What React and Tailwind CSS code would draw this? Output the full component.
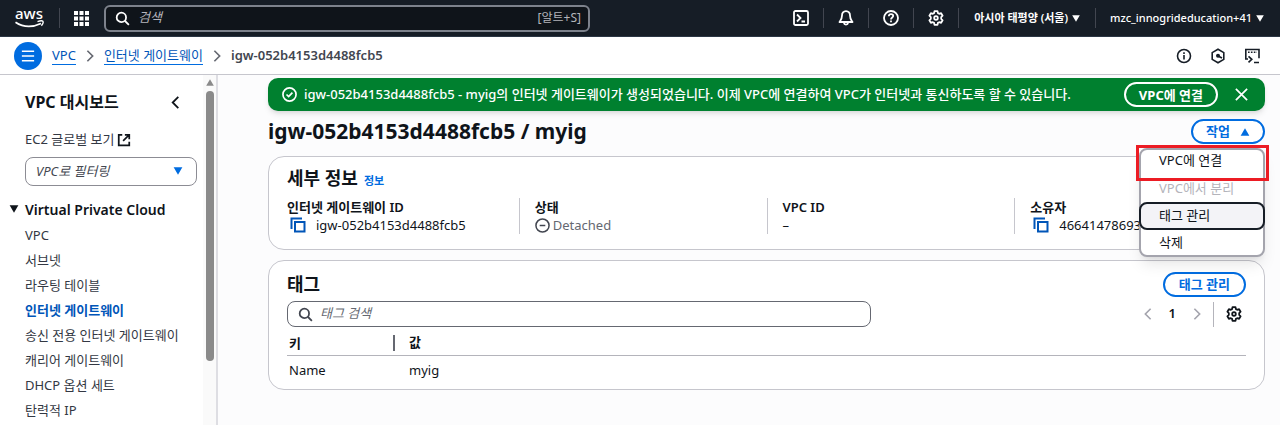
import React from "react";

const Caret = ({ className, up }) => (
  <svg viewBox="0 0 10 9" className={className} fill="currentColor" aria-hidden="true">
    <path d={up ? "M5 .4 9.9 8.6H.1z" : "M5 8.6.1.4h9.800z"} />
  </svg>
);

const Icon = ({ children, className = "size-4", width = 1.8 }) => (
  <svg
    viewBox="0 0 16 16"
    className={className}
    fill="none"
    stroke="currentColor"
    strokeWidth={width}
    aria-hidden="true"
  >
    {children}
  </svg>
);

const SearchIcon = ({ className }) => (
  <Icon className={className} width={1.9}>
    <circle cx="6.8" cy="6.8" r="5" />
    <path d="m10.400 10.400 4.400 4.400" />
  </Icon>
);

const GearIcon = () => (
  <Icon>
    <path
      strokeLinejoin="round"
      d="M6.500 1.200h3l.4 1.900 1.300.7 1.900-.6 1.500 2.500-1.400 1.400v1.800l1.400 1.400-1.500 2.500-1.900-.6-1.300.7-.4 1.900h-3l-.4-1.900-1.300-.7-1.900.6-1.500-2.500 1.400-1.400V7.100L1.400 5.700l1.500-2.500 1.900.6 1.300-.7z"
    />
    <circle cx="8" cy="8" r="1.800" />
  </Icon>
);

const CopyIcon = () => (
  <Icon className="size-4" width={2}>
    <path d="M5 5h9.500v9.500H5z" />
    <path d="M1.500 12V1.500H12" />
  </Icon>
);

const Chevron = ({ left, className }) => (
  <Icon className={className} width={1.9}>
    <path d={left ? "M11 2 5 8l6 6" : "m5 2 6 6-6 6"} />
  </Icon>
);

const Rule = ({ className = "" }) => <span className={"h-5 w-px shrink-0 bg-[#424650] " + className} />;

function TopBar() {
  return (
    <header className="flex h-[37px] shrink-0 items-center border-b border-[#2b3644] bg-[#161d26] pl-[15px] text-white">
      <a href="#home" aria-label="AWS" className="shrink-0">
        <svg viewBox="0 0 29 36" className="h-9 w-[29px]" aria-hidden="true">
          <text x="14" y="19" textAnchor="middle" fontSize="15" fontWeight="500" fontFamily="Noto Sans, sans-serif" fill="#fff">
            aws
          </text>
          <path d="M.5 22.200c7.500 5 17 5.200 25.500 1.200" fill="none" stroke="#fff" strokeWidth="1.700" />
          <path d="M22.500 21.600c2.200-.8 4.800-.9 5.400-.3.500.7-.1 2.800-1.500 4.500" fill="none" stroke="#fff" strokeWidth="1.400" />
        </svg>
      </a>
      <Rule className="ml-[15px]" />
      <button aria-label="서비스" className="ml-3.5 shrink-0">
        <svg viewBox="0 0 15 15" className="size-[15px]" fill="currentColor" aria-hidden="true">
          {[0, 5.5, 11].map((y) =>
            [0, 5.5, 11].map((x) => <rect key={x + "-" + y} x={x} y={y} width="4" height="4" />)
          )}
        </svg>
      </button>
      <label className="ml-[15px] flex h-[27px] w-[486px] items-center rounded-md border-2 border-[#7d828c] bg-[#0f141a] pr-[7px] pl-[9px]">
        <SearchIcon className="size-[15px] shrink-0" />
        <input
          type="search"
          aria-label="검색"
          placeholder="검색"
          className="ml-2 min-w-0 flex-1 bg-transparent text-[13px] italic outline-none placeholder:text-[#b4b4bb]"
        />
        <span className="text-[12px] text-[#b4b4bb]">[알트+S]</span>
      </label>
      <div className="ml-auto flex items-center">
        <button aria-label="CloudShell" className="mr-3.5">
          <Icon>
            <rect x="1" y="1" width="14" height="14" rx="1.500" />
            <path d="m4 4.500 3.500 3.500L4 11.500M8.500 11.500H12" />
          </Icon>
        </button>
        <Rule />
        <button aria-label="알림" className="mx-3.5">
          <Icon>
            <path strokeLinejoin="round" d="M8 1.200c-2.600 0-4 1.900-4 4.200C4 9 2.800 10.200 1.500 12h13C13.200 10.200 12 9 12 5.400c0-2.300-1.400-4.200-4-4.200z" />
            <path d="M6 13c.2 2.200 3.800 2.200 4 0" />
          </Icon>
        </button>
        <Rule />
        <button aria-label="도움말" className="mx-3.5">
          <Icon>
            <circle cx="8" cy="8" r="7" />
            <path d="M5.800 6.300C5.900 4.800 6.900 4.200 8 4.200c1.300 0 2.200.7 2.200 1.900C10.200 7.600 8 7.600 8 9.500M8 10.500v1.700" />
          </Icon>
        </button>
        <Rule />
        <button aria-label="설정" className="mx-3.5">
          <GearIcon />
        </button>
        <Rule />
        <button className="mx-[15px] flex items-center gap-1 text-[11px] font-semibold">
          아시아 태평양 (서울)
          <Caret className="h-[7px] w-2" />
        </button>
        <Rule />
        <button className="mr-4 ml-3.5 flex items-center gap-1 text-[11px] font-medium">
          mzc_innogrideducation+41
          <Caret className="h-[7px] w-2" />
        </button>
      </div>
    </header>
  );
}

function Breadcrumbs() {
  return (
    <div className="flex h-[38px] shrink-0 items-center border-b border-[#c6c6cd] bg-white pr-5 pl-3.5">
      <button aria-label="탐색 열기" className="grid size-7 place-items-center rounded-full bg-[#006ce0] text-white">
        <Icon className="size-3.5" width={1.8}>
          <path d="M1 2.500h14M1 8h14M1 13.500h14" />
        </Icon>
      </button>
      <nav className="ml-2.5 flex items-center gap-[7px] text-[13px] leading-[17px]">
        <a href="#vpc" className="border-b border-[#006ce0] text-[#0055b8]">VPC</a>
        <Chevron className="size-3.5 text-[#656871]" />
        <a href="#igw" className="border-b border-[#006ce0] text-[#0055b8]">인터넷 게이트웨이</a>
        <Chevron className="size-3.5 text-[#656871]" />
        <span className="font-semibold text-[#424650]">igw-052b4153d4488fcb5</span>
      </nav>
      <div className="ml-auto flex gap-[18px] text-[#161d26]">
        <button aria-label="정보">
          <Icon width={1.6}>
            <circle cx="8" cy="8" r="6.500" />
            <path d="M8 7v4.500M8 4.200v1.700" />
          </Icon>
        </button>
        <button aria-label="보안">
          <Icon width={1.6}>
            <path d="m8 1.200 5.800 3.400v6.800L8 14.800l-5.800-3.400V4.600z" />
            <path d="m8 8 4 2" />
            <circle cx="8" cy="7.800" r="1.200" fill="currentColor" />
          </Icon>
        </button>
        <button aria-label="터미널">
          <Icon width={1.6}>
            <path d="M4 11H1.800V1.500H15v8.800M4.500 8.300l3.300 3-3.300 3M10 14.500h5" />
            <path strokeDasharray="1.600 1.300" d="M4 4.300h9" />
          </Icon>
        </button>
      </div>
    </div>
  );
}

const links = [
  "VPC",
  "서브넷",
  "라우팅 테이블",
  "인터넷 게이트웨이",
  "송신 전용 인터넷 게이트웨이",
  "캐리어 게이트웨이",
  "DHCP 옵션 세트",
  "탄력적 IP",
];

function Sidebar() {
  return (
    <aside className="flex w-[218px] shrink-0 overflow-hidden border-r-2 border-[#dedee3] bg-white">
      <div className="min-w-0 flex-1 pt-4">
        <div className="flex h-[22px] items-center justify-between pr-5 pl-[25px]">
          <h2 className="text-[16px] font-bold">VPC 대시보드</h2>
          <button aria-label="탐색 닫기">
            <Chevron left className="size-[15px]" />
          </button>
        </div>
        <a href="#ec2" className="mt-[17px] ml-[25px] flex h-5 items-center gap-[3px] text-[13px] text-[#333843]">
          EC2 글로벌 보기
          <Icon className="size-3.5 text-[#0f141a]" width={2}>
            <path d="M6 2H2v12h12v-4M9 2h5v5M14 2 7 9" />
          </Icon>
        </a>
        <div className="relative mt-[7px] mr-1.5 ml-[25px]">
          <select
            aria-label="VPC로 필터링"
            className="h-[29px] w-full appearance-none rounded-lg border border-[#8c8c94] bg-white px-2.5 text-[13px] text-[#424650] italic"
          >
            <option>VPC로 필터링</option>
          </select>
          <Caret className="pointer-events-none absolute top-2.5 right-3.5 h-2 w-2.5 text-[#006ce0]" />
        </div>
        <button className="mt-[13px] flex h-5 items-center gap-1.5 pl-[9px] text-[14px] font-semibold">
          <Caret className="h-2 w-2.5" />
          Virtual Private Cloud
        </button>
        <ul className="mt-1 pl-[25px] text-[13px] leading-[25px]">
          {links.map((l) => (
            <li key={l}>
              <a href="#nav" className={l === "인터넷 게이트웨이" ? "font-bold text-[#0055b8]" : "text-[#333843]"}>
                {l}
              </a>
            </li>
          ))}
        </ul>
      </div>
      <div className="flex w-[13px] shrink-0 flex-col items-center bg-[#fafafa] pt-1" aria-hidden="true">
        <Caret up className="h-[7px] w-2 text-[#8a8a8a]" />
        <div className="mt-[5px] h-[270px] w-2 rounded-full bg-[#8a8a8a]" />
      </div>
    </aside>
  );
}

function Banner() {
  return (
    <div className="flex h-[33px] items-center rounded-[10px] bg-[#00802f] pr-4 pl-3.5 text-[13px] text-white shadow-md">
      <Icon className="size-[15px] shrink-0">
        <circle cx="8" cy="8" r="7" />
        <path d="m4.800 8 2.300 2.300 4-4.300" />
      </Icon>
      <p className="ml-[7px] font-medium">
        igw-052b4153d4488fcb5 - myig의 인터넷 게이트웨이가 생성되었습니다. 이제 VPC에 연결하여 VPC가 인터넷과 통신하도록 할 수 있습니다.
      </p>
      <button className="ml-auto h-[25px] shrink-0 rounded-full border-2 border-white px-[13px] leading-5 font-bold">
        VPC에 연결
      </button>
      <button aria-label="닫기" className="ml-4">
        <Icon className="size-[15px]">
          <path d="m2 2 12 12M14 2 2 14" />
        </Icon>
      </button>
    </div>
  );
}

function ActionsMenu() {
  return (
    <div className="relative">
      <button
        aria-expanded="true"
        className="flex h-[25px] items-center gap-2.5 rounded-full border-2 border-[#006ce0] bg-white px-[13px] text-[13px] font-bold text-[#006ce0]"
      >
        작업
        <Caret up className="h-2 w-2.5" />
      </button>
      <div
        role="menu"
        className="absolute top-[29px] right-0 z-10 flex w-[126px] flex-col rounded-lg border-2 border-[#a4a4ad] bg-white text-[13px] shadow-lg"
      >
        <button role="menuitem" className="h-[26px] pb-1 pl-[18px] text-left">VPC에 연결</button>
        <button role="menuitem" disabled className="h-[26px] pl-[18px] text-left text-[#b4b4bb]">VPC에서 분리</button>
        <button
          role="menuitem"
          className="-mx-0.5 h-7 rounded-lg border-2 border-[#161d26] bg-[#f3f3f7] pl-[18px] text-left"
        >
          태그 관리
        </button>
        <button role="menuitem" className="h-[25px] pl-[18px] text-left">삭제</button>
        <div className="pointer-events-none absolute -top-[5px] -right-[6px] -left-[5px] h-9 border-[3px] border-[#ec1c24]" />
      </div>
    </div>
  );
}

function Field({ label, children, first }) {
  return (
    <div className={"h-9 min-w-0 border-l pl-[15px] leading-[18px] " + (first ? "border-transparent" : "border-[#c6c6cd]")}>
      <dt className="font-semibold">{label}</dt>
      <dd className="flex items-center whitespace-nowrap">{children}</dd>
    </div>
  );
}

function Details() {
  return (
    <section className="mt-3 h-[94px] rounded-2xl border border-[#c6c6cd] bg-white px-[18px] pt-[9px]">
      <div className="flex h-6 items-baseline gap-1.5">
        <h2 className="text-[18px] leading-6 font-bold">세부 정보</h2>
        <a href="#info" className="text-[11px] font-bold text-[#006ce0]">정보</a>
      </div>
      <dl className="-mx-4 mt-2 grid grid-cols-4 text-[13px]">
        <Field label="인터넷 게이트웨이 ID" first>
          <button aria-label="ID 복사" className="mr-2.5 ml-[3px] text-[#0055b8]"><CopyIcon /></button>
          igw-052b4153d4488fcb5
        </Field>
        <Field label="상태">
          <span className="flex items-center gap-[3px] text-[#656871]">
            <Icon className="size-[15px] text-[#424650]" width={1.6}>
              <circle cx="8" cy="8" r="7" />
              <path d="M5 8h6" />
            </Icon>
            Detached
          </span>
        </Field>
        <Field label="VPC ID">–</Field>
        <Field label="소유자">
          <button aria-label="소유자 복사" className="mr-2.5 ml-[3px] text-[#0055b8]"><CopyIcon /></button>
          46641478693
        </Field>
      </dl>
    </section>
  );
}

function Tags() {
  return (
    <section className="mt-2.5 h-[130px] rounded-2xl border border-[#c6c6cd] bg-white px-[18px] pt-2.5 text-[13px]">
      <div className="flex h-[26px] items-center justify-between">
        <h2 className="text-[18px] font-bold">태그</h2>
        <button className="h-[25px] rounded-full border-2 border-[#006ce0] px-3.5 leading-5 font-bold text-[#006ce0]">태그 관리</button>
      </div>
      <div className="mt-1 flex items-center justify-between">
        <label className="flex h-[26px] w-[584px] items-center rounded-lg border border-[#656871] px-2.5">
          <SearchIcon className="size-[15px] shrink-0 text-[#424650]" />
          <input
            type="search"
            aria-label="태그 검색"
            placeholder="태그 검색"
            className="ml-[7px] min-w-0 flex-1 bg-transparent italic outline-none placeholder:text-[#656871]"
          />
        </label>
        <div className="flex items-center pr-1">
          <button aria-label="이전 페이지" className="text-[#a4a4ad]"><Chevron left className="size-3.5" /></button>
          <span className="mx-3.5 font-semibold">1</span>
          <button aria-label="다음 페이지" className="text-[#a4a4ad]"><Chevron className="size-3.5" /></button>
          <span className="mr-3 ml-[9px] h-[25px] w-px bg-[#b4b4bb]" />
          <button aria-label="기본 설정"><GearIcon /></button>
        </div>
      </div>
      <table className="w-full table-fixed text-left">
        <thead>
          <tr className="border-b border-[#b4b4bb]">
            <th className="h-7 w-[108px] pt-1 pl-0.5">
              <div className="h-4 border-r-2 border-[#656871] leading-4">키</div>
            </th>
            <th className="pt-1 pl-3.5">값</th>
          </tr>
        </thead>
        <tbody>
          <tr>
            <td className="h-[30px] pl-0.5">Name</td>
            <td className="pl-3.5">myig</td>
          </tr>
        </tbody>
      </table>
    </section>
  );
}

export default function App() {
  return (
    <div className="flex h-screen flex-col overflow-hidden bg-white font-['Noto_Sans','Noto_Sans_CJK_KR',sans-serif] text-[#0f141a]">
      <TopBar />
      <Breadcrumbs />
      <div className="flex min-h-0 flex-1">
        <Sidebar />
        <main className="min-w-0 flex-1 bg-[#fcfcfd] pt-[3px] pr-[15px] pl-[50px]">
          <Banner />
          <div className="mt-2 flex h-[25px] items-center justify-between">
            <h1 className="text-[21px] font-bold">igw-052b4153d4488fcb5 / myig</h1>
            <ActionsMenu />
          </div>
          <Details />
          <Tags />
        </main>
      </div>
    </div>
  );
}
